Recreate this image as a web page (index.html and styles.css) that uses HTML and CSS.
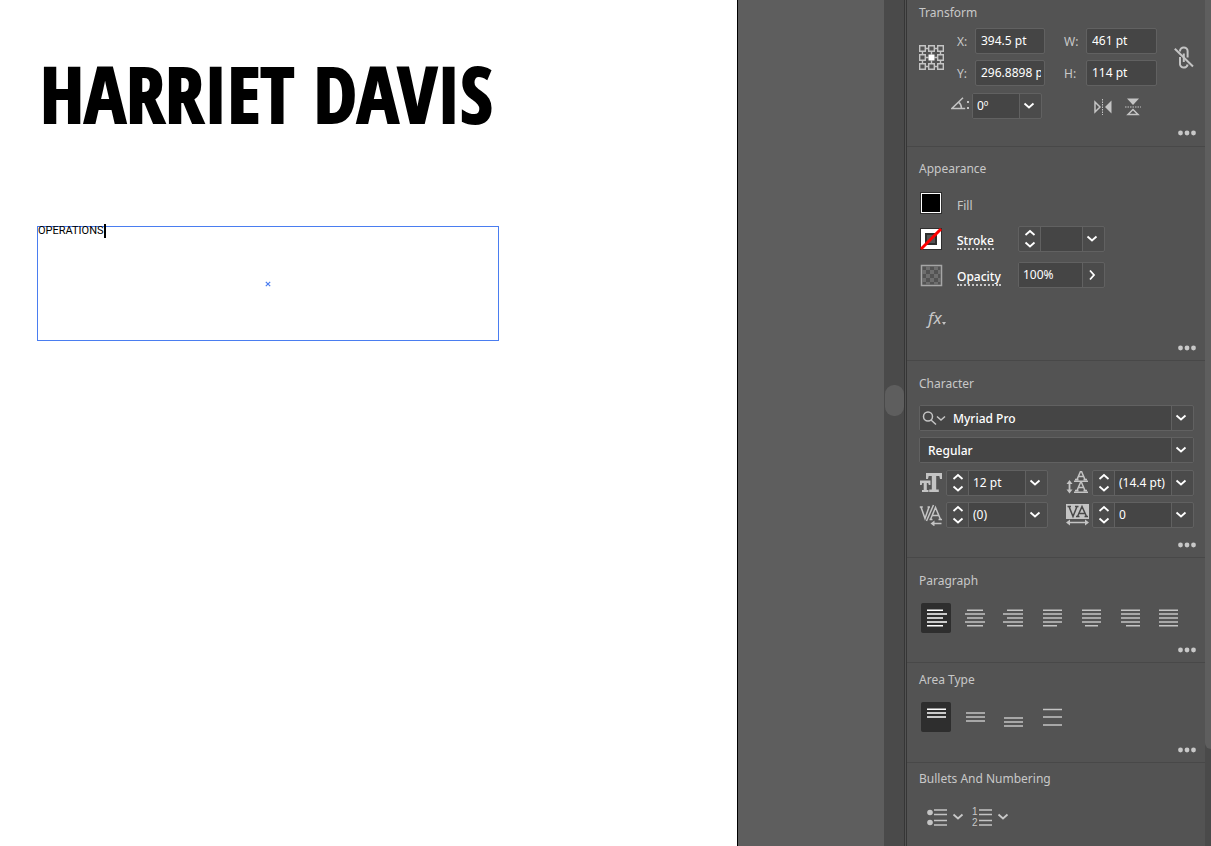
FILE: index.html
```html
<!DOCTYPE html>
<html lang="en">
<head>
<meta charset="utf-8">
<meta name="viewport" content="width=device-width, initial-scale=1">
<title>Artboard and properties</title>
<link rel="stylesheet" href="styles.css">
</head>
<body>
<svg class="defs" aria-hidden="true">
  <symbol id="down" viewBox="0 0 12 8"><path d="M1.5 1.5 6 5.5 10.500 1.5" fill="none" stroke="currentColor" stroke-width="1.800"/></symbol>
  <symbol id="up" viewBox="0 0 12 8"><path d="M1.5 6 6 2 10.500 6" fill="none" stroke="currentColor" stroke-width="1.800"/></symbol>
  <symbol id="dots" viewBox="0 0 18 6"><g fill="currentColor"><circle cx="2.500" cy="3" r="2.400"/><circle cx="9" cy="3" r="2.400"/><circle cx="15.500" cy="3" r="2.400"/></g></symbol>
</svg>
<div class="app">
  <main class="canvas">
    <div class="artboard">
      <h1 class="name">HARRIET DAVIS</h1>
      <div class="text-frame">
        <p class="frame-text">OPERATIONS<span class="caret"></span></p>
        <svg class="center-mark" viewBox="0 0 6 6" aria-hidden="true"><path d="M.8.8 5.200 5.200M5.200.8.8 5.200" stroke="#4a7df0" stroke-width="1.200"/></svg>
      </div>
    </div>
    <div class="canvas-scroll"><div class="canvas-thumb"></div></div>
  </main>

  <aside class="panel">
    <section class="section transform">
      <h2>Transform</h2>
      <div class="transform-grid">
        <button class="icon-btn refpoint" aria-label="Reference point">
          <svg width="25" height="25" viewBox="0 0 25 25"><g fill="none" stroke="#c4c4c4" stroke-width="1.400"><path d="M6.500 3.500h3M15.500 3.500h3M6.500 12.500h3M15.500 12.500h3M6.500 21.500h3M15.500 21.500h3M3.500 6.500v3M3.500 15.500v3M12.500 6.500v3M12.500 15.500v3M21.500 6.500v3M21.500 15.500v3"/><path d="M.7.7h5.600v5.600H.7zM9.700.7h5.600v5.600H9.700zM18.700.7h5.600v5.600h-5.600zM.7 9.700h5.600v5.600H.7zM18.700 9.700h5.600v5.600h-5.600zM.7 18.700h5.600v5.600H.7zM9.700 18.700h5.600v5.600H9.700zM18.700 18.700h5.600v5.600h-5.600z"/></g><path d="M9.500 9.500h6v6h-6z" fill="#fff"/></svg>
        </button>
        <label for="x">X:</label><input id="x" class="field" value="394.5 pt">
        <label for="w" class="far">W:</label><input id="w" class="field" value="461 pt">
        <button class="icon-btn link" aria-label="Constrain proportions">
          <svg width="20" height="24" viewBox="0 0 20 24" fill="none" stroke="#c4c4c4" stroke-width="2"><path d="M6 5.500V5a3.800 3.500 0 0 1 7.600 0v6.500M6 11v6.500a3.800 3.500 0 0 0 7.600 1M9.800 7.500v8.500"/><path d="M.8 2.800 19 20.500"/></svg>
        </button>
        <label for="y">Y:</label><input id="y" class="field" value="296.8898 pt">
        <label for="h" class="far">H:</label><input id="h" class="field" value="114 pt">
      </div>
      <div class="angle-row">
        <label for="angle" class="angle-label" aria-label="Angle"><svg width="20" height="14" viewBox="0 0 20 14" fill="none" stroke="#c4c4c4" stroke-width="1.500"><path d="M12 .8.9 11.500h13.300M7.500 5.200c2.300 1.600 3 3.600 3 6.300"/><path d="M16 5h2M16 11h2" stroke-width="2"/></svg></label>
        <div class="combo angle"><input id="angle" value="0º"><button aria-label="Angle presets"><svg class="chev"><use href="#down"/></svg></button></div>
        <div class="flips">
          <button class="icon-btn" aria-label="Flip horizontally"><svg width="18" height="16" viewBox="0 0 18 16"><path d="M1 3v10l5-5z" fill="none" stroke="#c4c4c4" stroke-width="1.500"/><path d="M17.500 1.500v13L11 8z" fill="#c4c4c4"/><path d="M8.500 0v16" stroke="#c4c4c4" stroke-dasharray="1.500 1"/></svg></button>
          <button class="icon-btn" aria-label="Flip vertically"><svg width="16" height="18" viewBox="0 0 16 18"><path d="M2 .5h12L8 7z" fill="#c4c4c4"/><path d="M3 16.500h10L8 11.500z" fill="none" stroke="#c4c4c4" stroke-width="1.500"/><path d="M0 9h16" stroke="#c4c4c4" stroke-dasharray="1.500 1"/></svg></button>
        </div>
      </div>
      <button class="more" aria-label="More transform options"><svg><use href="#dots"/></svg></button>
    </section>

    <section class="section appearance">
      <h2>Appearance</h2>
      <div class="look-row">
        <button class="icon-btn" aria-label="Fill color"><svg width="23" height="23" viewBox="0 0 23 23"><path fill="#2e2e2e" d="M0 0h22v22H0z"/><path fill="#fff" d="M1 1h20v20H1z"/><path fill="#000" d="M2 2h18v18H2z"/></svg></button>
        <span class="look-label">Fill</span>
      </div>
      <div class="look-row">
        <button class="icon-btn" aria-label="Stroke color"><svg width="23" height="23" viewBox="0 0 23 23"><path fill="#2e2e2e" d="M0 0h22v22H0z"/><path fill="#fff" d="M1 1h20v20H1z"/><path fill="#2e2e2e" d="M5 5h12v12H5z"/><path fill="#535353" d="M7 7h8v8H7z"/><path d="M1 21 21 1" stroke="#f00" stroke-width="3"/></svg></button>
        <button class="look-label look-link">Stroke</button>
        <div class="combo stroke"><div class="stepper"><button aria-label="Increase stroke"><svg class="chev"><use href="#up"/></svg></button><button aria-label="Decrease stroke"><svg class="chev"><use href="#down"/></svg></button></div><input aria-label="Stroke weight" value=""><button aria-label="Stroke presets"><svg class="chev"><use href="#down"/></svg></button></div>
      </div>
      <div class="look-row">
        <button class="icon-btn" aria-label="Opacity swatch"><svg width="23" height="23" viewBox="0 0 23 23"><path fill="#535353" stroke="#a6a6a6" stroke-width="1.500" d="M1.500 1.500h20v20h-20z"/><path fill="#6e6e6e" d="M6 2h4v4H6zM14 2h4v4h-4zM2 6h4v4H2zM10 6h4v4h-4zM18 6h3v4h-3zM6 10h4v4H6zM14 10h4v4h-4zM2 14h4v4H2zM10 14h4v4h-4zM18 14h3v4h-3zM6 18h4v3H6zM14 18h4v3h-4z"/></svg></button>
        <button class="look-label look-link">Opacity</button>
        <div class="combo opacity"><input aria-label="Opacity" value="100%"><button aria-label="Opacity slider"><svg width="8" height="12" viewBox="0 0 8 12"><path d="M2 1.500 6 6l-4 4.500" fill="none" stroke="#fff" stroke-width="1.800"/></svg></button></div>
      </div>
      <button class="fx" aria-label="Effects"><i>fx</i><svg width="4" height="3" viewBox="0 0 4 3"><path d="M0 0h4L2 3z" fill="#c4c4c4"/></svg></button>
      <button class="more" aria-label="More appearance options"><svg><use href="#dots"/></svg></button>
    </section>

    <section class="section character">
      <h2>Character</h2>
      <div class="rows">
        <div class="combo font"><button class="search" aria-label="Search fonts"><svg width="24" height="16" viewBox="0 0 24 16" fill="none" stroke="#c4c4c4" stroke-width="1.500"><circle cx="6" cy="6.500" r="4.500"/><path d="m9 10 5 4.500M15 6.500l4 3.500 4-3.500"/></svg></button><input aria-label="Font family" value="Myriad Pro"><button aria-label="Font list"><svg class="chev"><use href="#down"/></svg></button></div>
        <div class="combo style"><select aria-label="Font style"><option>Regular</option></select><span class="select-arrow"><svg class="chev"><use href="#down"/></svg></span></div>
        <div class="char-grid">
          <label for="size" aria-label="Font size"><svg width="24" height="20" viewBox="0 0 24 20" fill="#c4c4c4"><path d="M7 0h16v6h-2l-.7-3H17.200v13.500h2.600V19h-9.600v-2.500h2.600V3H9.700L9 6H7z"/><path d="M1 7.500h10.500V12H9.800l-.6-2H7.800v7h1.700v2H3v-2h1.700v-7H3.300l-.6 2H1z"/></svg></label>
          <div class="combo"><div class="stepper"><button aria-label="Increase size"><svg class="chev"><use href="#up"/></svg></button><button aria-label="Decrease size"><svg class="chev"><use href="#down"/></svg></button></div><input id="size" value="12 pt"><button aria-label="Size presets"><svg class="chev"><use href="#down"/></svg></button></div>
          <label for="leading" class="second" aria-label="Leading"><svg width="24" height="24" viewBox="0 0 24 24" fill="none" stroke="#c4c4c4" stroke-width="1.500"><path d="M8 10.200h14M8 21.200h14M11 8.500l3.500-8h1l3.500 8M12.300 5.500h5.400M9 8.500h3.500M17.500 8.500H21M11 19.500l3.500-8h1l3.500 8M12.300 16.500h5.400M9 19.500h3.500M17.500 19.500H21"/><path d="M3.500 11v9" stroke-width="1.800"/><path d="m.5 13 3-4 3 4zM.5 18.500l3 4 3-4z" fill="#c4c4c4" stroke="none"/></svg></label>
          <div class="combo"><div class="stepper"><button aria-label="Increase leading"><svg class="chev"><use href="#up"/></svg></button><button aria-label="Decrease leading"><svg class="chev"><use href="#down"/></svg></button></div><input id="leading" value="(14.4 pt)"><button aria-label="Leading presets"><svg class="chev"><use href="#down"/></svg></button></div>
          <label for="kerning" aria-label="Kerning"><svg width="24" height="22" viewBox="0 0 24 22" fill="none" stroke="#c4c4c4" stroke-width="1.500"><path d="M2 3 6 14.500 10 3M.8 3h3M8.500 3h2.500M14.500 1 7.500 17M11.500 15.500 16.500 3.500l5 12M13.500 11.500h6.500M10.500 15.500h3M19.500 15.500h3.500"/><path d="M14 19.500h8.500"/><path d="m11.500 19.500 4-3v6z" fill="#c4c4c4" stroke="none"/></svg></label>
          <div class="combo"><div class="stepper"><button aria-label="Increase kerning"><svg class="chev"><use href="#up"/></svg></button><button aria-label="Decrease kerning"><svg class="chev"><use href="#down"/></svg></button></div><input id="kerning" value="(0)"><button aria-label="Kerning presets"><svg class="chev"><use href="#down"/></svg></button></div>
          <label for="tracking" class="second" aria-label="Tracking"><svg width="24" height="22" viewBox="0 0 24 22" fill="none"><path d="M0 0h23v15H0z" fill="#c4c4c4"/><path d="m3 2.500 4 10 4-10M1.500 2.500H5M9 2.500h3.500M11.500 12.500l4.500-10 4.500 10M13.500 9.500h5M10 12.500h3.500M18.500 12.500H22" stroke="#484848" stroke-width="1.500"/><path d="M2 18.500h19" stroke="#c4c4c4" stroke-width="1.500"/><path d="m0 18.500 4-3v6zM23 18.500l-4-3v6z" fill="#c4c4c4"/></svg></label>
          <div class="combo"><div class="stepper"><button aria-label="Increase tracking"><svg class="chev"><use href="#up"/></svg></button><button aria-label="Decrease tracking"><svg class="chev"><use href="#down"/></svg></button></div><input id="tracking" value="0"><button aria-label="Tracking presets"><svg class="chev"><use href="#down"/></svg></button></div>
        </div>
      </div>
      <button class="more" aria-label="More character options"><svg><use href="#dots"/></svg></button>
    </section>

    <section class="section paragraph">
      <h2>Paragraph</h2>
      <div class="tools spread">
        <button class="tool active" aria-label="Align left"><svg viewBox="0 0 30 30"><path d="M6 7.200h16M6 11h20M6 15h16M6 19h20M6 22.800h16"/></svg></button>
        <button class="tool" aria-label="Align center"><svg viewBox="0 0 30 30"><path d="M7 7.200h16M5 11h20M7 15h16M5 19h20M7 22.800h16"/></svg></button>
        <button class="tool" aria-label="Align right"><svg viewBox="0 0 30 30"><path d="M8 7.200h16M4 11h20M8 15h16M4 19h20M8 22.800h16"/></svg></button>
        <button class="tool" aria-label="Justify, last left"><svg viewBox="0 0 30 30"><path d="M6 7.200h19M6 11h19M6 15h19M6 19h19M6 22.800h14"/></svg></button>
        <button class="tool" aria-label="Justify, last centered"><svg viewBox="0 0 30 30"><path d="M6 7.200h19M6 11h19M6 15h19M6 19h19M9 22.800h13"/></svg></button>
        <button class="tool" aria-label="Justify, last right"><svg viewBox="0 0 30 30"><path d="M6 7.200h19M6 11h19M6 15h19M6 19h19M11 22.800h14"/></svg></button>
        <button class="tool" aria-label="Justify all lines"><svg viewBox="0 0 30 30"><path d="M5 7.200h19M5 11h19M5 15h19M5 19h19M5 22.800h19"/></svg></button>
      </div>
      <button class="more" aria-label="More paragraph options"><svg><use href="#dots"/></svg></button>
    </section>

    <section class="section area">
      <h2>Area Type</h2>
      <div class="tools">
        <button class="tool active" aria-label="Align top"><svg viewBox="0 0 30 30"><path d="M6 7.200h19M6 11h19M6 15h19"/></svg></button>
        <button class="tool" aria-label="Align middle"><svg viewBox="0 0 30 30"><path d="M6 11h19M6 15h19M6 19h19"/></svg></button>
        <button class="tool" aria-label="Align bottom"><svg viewBox="0 0 30 30"><path d="M5 16h19M5 20h19M5 24h19"/></svg></button>
        <button class="tool" aria-label="Justify vertically"><svg viewBox="0 0 30 30"><path d="M5 7.500h19M5 15h19M5 23h19"/></svg></button>
      </div>
      <button class="more" aria-label="More area type options"><svg><use href="#dots"/></svg></button>
    </section>

    <section class="section bullets">
      <h2>Bullets And Numbering</h2>
      <div class="lists">
        <button class="icon-btn list" aria-label="Bullets"><svg width="20" height="24" viewBox="0 -2 20 24"><g fill="#c4c4c4"><circle cx="3" cy="5.500" r="2.800"/><circle cx="3" cy="15.500" r="2.800"/></g><path d="M7 3h13M7 7.500h13M7 13.500h13M7 18h13" stroke="#c4c4c4" stroke-width="1.500"/></svg><svg class="chev"><use href="#down"/></svg></button>
        <button class="icon-btn list" aria-label="Numbering"><svg width="20" height="24" viewBox="0 -2 20 24"><text x="0" y="8" class="digit">1</text><text x="0" y="19" class="digit">2</text><path d="M7 3h13M7 7.500h13M7 13.500h13M7 18h13" stroke="#c4c4c4" stroke-width="1.500"/></svg><svg class="chev"><use href="#down"/></svg></button>
      </div>
    </section>
  </aside>
  <div class="panel-scroll"><div class="panel-thumb"></div></div>
</div>
</body>
</html>
```
FILE: styles.css
```css
* { box-sizing: border-box; }
body {
  margin: 0;
  font-family: "Noto Sans", "Open Sans", sans-serif;
  font-size: 12px;
  line-height: 16px;
  color: #c8c8c8;
  background: #535353;
}
h1, h2, p { margin: 0; font-weight: 400; }
button, input, select {
  font: inherit;
  color: inherit;
  margin: 0;
  padding: 0;
  border: 0;
  border-radius: 0;
  background: none;
}
svg { display: block; flex: none; }
.defs { position: absolute; width: 0; height: 0; }
.chev { width: 12px; height: 8px; }

.app { display: flex; min-height: 100vh; overflow: hidden; }

.canvas { flex: 1; display: flex; min-width: 0; background: #5e5e5e; }
.artboard {
  flex: 1;
  min-width: 0;
  margin-right: 146px;
  padding: 48px 36px 0 37px;
  background: #fff;
  border-right: 1px solid #000;
  color: #000;
}
.name {
  padding-left: 3px;
  font: 800 78px/90px "Open Sans Condensed", "Liberation Sans Narrow", sans-serif;
  -webkit-text-stroke: 2px #000;
  white-space: nowrap;
}
.text-frame {
  position: relative;
  max-width: 462px;
  height: 115px;
  margin-top: 88px;
  border: 1px solid #4a7df0;
}
.frame-text {
  display: flex;
  font: 400 11px/8px Roboto, "Liberation Sans", sans-serif;
}
.caret { width: 2px; height: 14px; margin-top: -3px; background: #000; }
.center-mark { position: absolute; inset: 0; margin: auto; width: 6px; height: 6px; }

.canvas-scroll { width: 20px; padding: 385px 0 0 1px; background: #4a4a4a; }
.canvas-thumb { height: 31px; border-radius: 9px; background: #5e5e5e; }

.panel { width: 301px; border-left: 3px double #363636; background: #535353; }
.section {
  display: flex;
  flex-direction: column;
  padding: 15px 11px 4px 12px;
  border-bottom: 1px solid #484848;
}
.section h2 { font-size: 12px; line-height: 16px; }
.more {
  align-self: flex-end;
  display: grid;
  place-items: center;
  width: 18px;
  height: 16px;
  margin-right: -2px;
  color: #c8c8c8;
}
.more svg { width: 18px; height: 6px; }
.icon-btn { display: grid; place-items: center; }

.field, .combo {
  height: 26px;
  border: 1px solid #616161;
  border-radius: 2px;
  color: #fff;
}
.field { width: 100%; min-width: 0; padding: 0 3px 2px 5px; background: #454545; background-clip: padding-box; }
.combo { display: flex; background: #4b4b4b; }
.combo > input { flex: 1; min-width: 0; padding: 0 0 0 4px; background: #454545; }
.combo > button { display: grid; place-items: center; width: 22px; padding-right: 3px; border-left: 1px solid #616161; }
.stepper { display: grid; grid-template-rows: 1fr 1fr; width: 22px; border-right: 1px solid #616161; }
.stepper button { display: grid; place-items: center; }

.section.transform { padding-top: 5px; padding-bottom: 5px; }
.transform-grid {
  display: grid;
  grid-template-columns: 32px 24px 70px 41px 71px 1fr;
  row-gap: 6px;
  margin-top: 7px;
}
.transform-grid label { padding: 6px 0 0 6px; }
.transform-grid .far { padding-left: 19px; }
.refpoint { grid-row: span 2; justify-items: start; }
.link { grid-column: 6; grid-row: 1 / span 2; justify-items: end; padding-top: 2px; }
.angle-row { display: flex; margin-top: 7px; padding-left: 32px; }
.angle-label { width: 21px; padding-top: 4px; }
.combo.angle { width: 70px; }
.flips { display: flex; align-items: center; gap: 13px; margin: 2px 0 0 52px; }
.transform .more { margin-top: 6px; }

.section.appearance { padding-top: 14px; }
.appearance h2 { margin-bottom: 3px; }
.look-row { display: grid; grid-template-columns: 24px 1fr 87px 89px; height: 26px; margin-top: 10px; align-items: center; }
.look-label { justify-self: start; margin: 5px 0 0 14px; }
.look-link { color: #fff; font-weight: 500; line-height: 15px; border-bottom: 2px dotted #c8c8c8; }
.fx { display: flex; align-items: flex-end; width: 22px; height: 20px; margin: 20px 0 12px 9px; font-size: 17px; line-height: 20px; }
.fx svg { margin-bottom: 3px; }

.rows { display: grid; grid-template-columns: minmax(0, 1fr); gap: 6px; margin-top: 13px; }
.combo.font > .search { width: 28px; padding: 0; border: 0; background: #454545; }
.combo.font > input { padding: 2px 0 0 5px; font-weight: 500; }
.combo.style { position: relative; }
.combo.style select { flex: 1; min-width: 0; appearance: none; padding: 2px 0 0 8px; background: #454545; font-weight: 500; }
.select-arrow {
  position: absolute;
  inset: 0 0 0 auto;
  display: grid;
  place-items: center;
  width: 22px;
  padding-right: 3px;
  border-left: 1px solid #616161;
  background: #4b4b4b;
  pointer-events: none;
}
.char-grid { display: grid; grid-template-columns: 27px 102px 44px minmax(0, 1fr); row-gap: 6px; margin-top: 1px; }
.char-grid label { display: grid; align-items: center; }
.char-grid .second { padding-left: 18px; }
.character .more { margin-top: 9px; }

.tools { display: flex; gap: 9px; margin-top: 14px; padding: 0 10px 0 2px; }
.tools.spread { justify-content: space-between; gap: 0; }
.tool { width: 30px; height: 30px; color: #c4c4c4; border-radius: 2px; }
.tool svg { width: 30px; height: 30px; stroke: currentColor; stroke-width: 1.5; }
.tool.active { background: #2e2e2e; color: #fff; }
.tools + .more { margin-top: 9px; }
.section.area, .section.bullets { padding-top: 9px; }
.area .more { margin-top: 10px; }
.section.bullets { padding-top: 8px; border: 0; }
.lists { display: flex; gap: 8px; margin: 18px 0 0 8px; }
.list { grid-template-columns: 20px 12px; gap: 5px; }
.digit { font: 10px "Liberation Sans", sans-serif; fill: #c8c8c8; }

.panel-scroll { width: 6px; background: #4a4a4a; overflow: hidden; }
.panel-thumb { width: 12px; height: 749px; border-radius: 0 0 6px 6px; background: #5e5e5e; }
```
